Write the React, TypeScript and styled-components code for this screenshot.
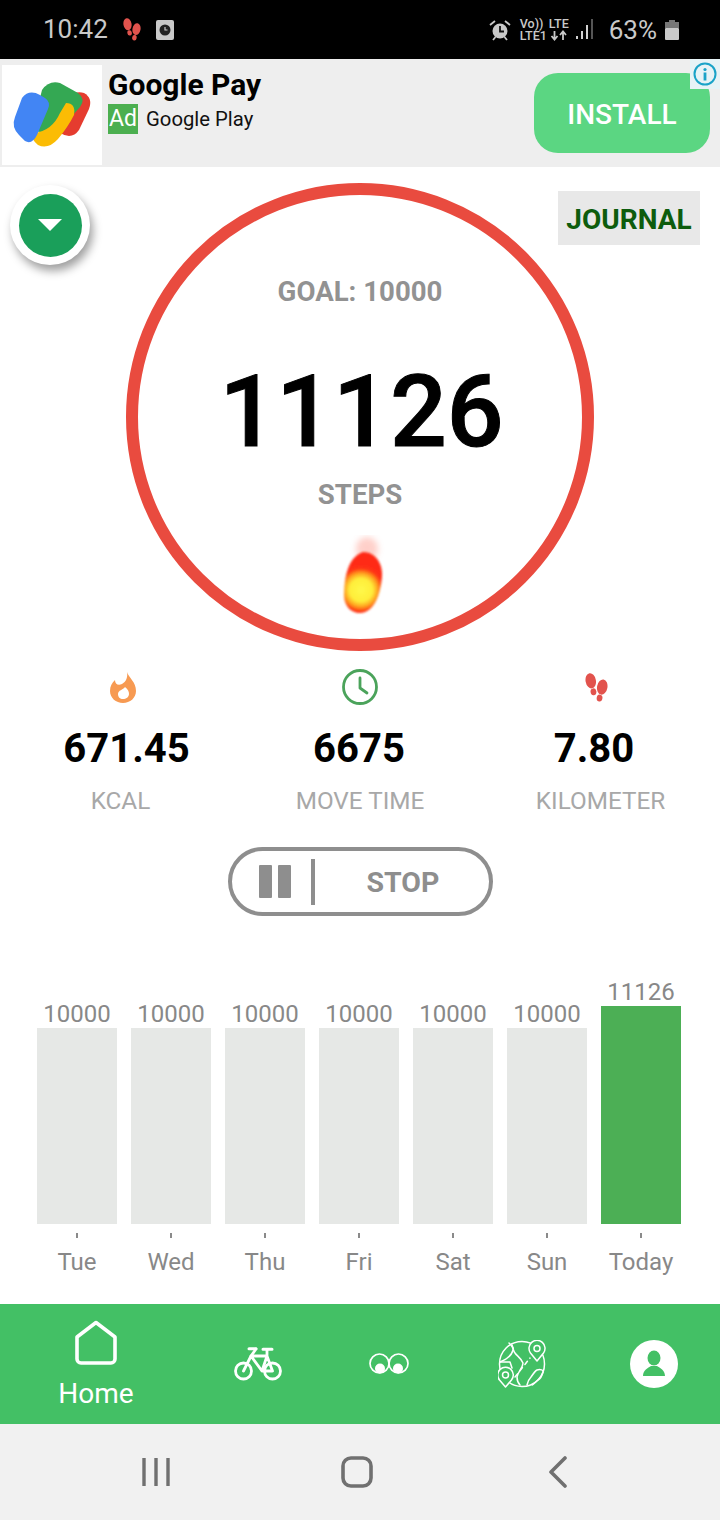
import React from "react";
import styled, { createGlobalStyle } from "styled-components";

const Global = createGlobalStyle`
  html, body { margin: 0; padding: 0; background: #fff; }
  body { font-family: Roboto, "Liberation Sans", sans-serif; }
  * { box-sizing: border-box; }
`;

const Page = styled.div`
  width: 720px; height: 1520px; display: flex; flex-direction: column; background: #fff; overflow: hidden;
`;

/* status bar */
const StatusBar = styled.div`
  height: 59px; background: #000; color: #c9c9c9; display: flex; align-items: center; padding: 0 0 0 43px; flex: none;
`;
const Time = styled.span`font-size: 26px; line-height: 59px; margin-right: 15px;`;
const StatusRight = styled.div`margin-left: auto; display: flex; align-items: center; padding-right: 41px;`;
const NetStack = styled.div`
  display: flex; flex-direction: column; font-size: 12.5px; line-height: 12px; color: #c9c9c9; align-items: flex-start; font-weight: 500; margin-left: 9px;
`;
const NetStackCenter = styled(NetStack)`align-items: center; margin-left: 2px; margin-right: 7px;`;
const Percent = styled.span`font-size: 26px; margin-left: 15px; margin-right: 8px;`;

/* ad */
const AdBar = styled.div`
  height: 108px; background: #eeeeee; display: flex; position: relative; padding: 6px 10px 2px 2px; flex: none;
`;
const AdIcon = styled.div`width: 100px; height: 100px; background: #fff; flex: none;`;
const AdText = styled.div`margin-left: 6px; display: flex; flex-direction: column;`;
const AdTitle = styled.div`font-size: 30px; font-weight: 700; line-height: 40px; color: #000;`;
const AdRow = styled.div`display: flex; align-items: center; margin-top: -1px;`;
const AdTag = styled.span`
  width: 30px; height: 30px; background: #4caf50; color: #fff; font-size: 23px; line-height: 30px; text-align: center;
`;
const AdStore = styled.span`font-size: 20.3px; color: #111; margin-left: 8px;`;
const InstallBtn = styled.div`
  margin-left: auto; margin-top: 8px; width: 176px; height: 80px; border-radius: 24px; background: #5bd682; color: #fff;
  font-size: 28px; font-weight: 500; display: flex; align-items: center; justify-content: center; padding-top: 3px;
`;
const InfoBadge = styled.div`
  position: absolute; top: 0; right: 0; width: 30px; height: 30px; background: #e6f3f6; display: flex; align-items: center; justify-content: center;
`;

/* hero */
const Hero = styled.section`
  position: relative; display: flex; justify-content: center; padding-top: 16px; flex: none;
`;
const Ring = styled.div`
  width: 468px; height: 468px; border-radius: 50%; border: 12px solid #e94b3f; display: flex; flex-direction: column; align-items: center; padding-top: 79px;
`;
const Goal = styled.div`font-size: 27.6px; font-weight: 700; color: #929292; line-height: 36px;`;
const Count = styled.div`font-size: 100px; font-weight: 500; color: #000; line-height: 110px; margin-top: 47px; margin-left: 3px; -webkit-text-stroke: 1px #000;`;
const StepsLabel = styled.div`font-size: 27.6px; font-weight: 700; color: #929292; line-height: 36px; margin-top: 10px;`;
const FlameWrap = styled.div`margin-top: 22px; margin-left: 4px; width: 46px; height: 80px; flex: none;`;
const FabOuter = styled.button`
  position: absolute; left: 10px; top: 18px; width: 80px; height: 80px; border-radius: 50%; background: #fff; border: 0; padding: 0;
  box-shadow: 3px 6px 10px rgba(0,0,0,0.38); display: flex; align-items: center; justify-content: center;
`;
const FabInner = styled.span`
  width: 63px; height: 63px; border-radius: 50%; background: #1a9f5a; display: flex; align-items: center; justify-content: center;
`;
const JournalBtn = styled.div`
  position: absolute; left: 558px; top: 24px; width: 142px; height: 54px; background: #e8e8e8; color: #0d5c0d; font-size: 28px; font-weight: 700;
  display: flex; align-items: center; justify-content: center; padding-top: 3px;
`;

/* stats */
const StatsGrid = styled.div`
  display: grid; grid-template-columns: 238px 238px 238px; padding-left: 3px; margin-top: 18px; flex: none;
`;
const Stat = styled.div`display: flex; flex-direction: column; align-items: center;`;
const StatIcon = styled.div<{ $dx?: number }>`height: 36px; display: flex; align-items: center; justify-content: center; margin-left: ${p => p.$dx ?? 0}px;`;
const StatValue = styled.div<{ $dx?: number }>`font-size: 40px; font-weight: 700; color: #000; line-height: 48px; margin-top: 20px; margin-left: ${p => p.$dx ?? 0}px;`;
const StatLabel = styled.div<{ $dx?: number }>`font-size: 24.3px; color: #a8a8a8; line-height: 30px; margin-top: 13px; margin-left: ${p => p.$dx ?? 0}px;`;

/* pause / stop */
const PillRow = styled.div`display: flex; justify-content: center; margin-top: 31px; flex: none;`;
const Pill = styled.div`
  width: 265px; height: 69px; border: 4px solid #8e8e8e; border-radius: 35px; display: flex; align-items: center; padding-left: 27px;
`;
const PauseBar = styled.span`width: 13px; height: 33px; background: #8e8e8e; border-radius: 1px; & + & { margin-left: 6px; }`;
const PillDivider = styled.span`width: 4px; height: 46px; background: #8e8e8e; margin-left: 20px;`;
const StopText = styled.span`font-size: 28.5px; font-weight: 700; color: #8e8e8e; margin-left: 52px; padding-top: 2px;`;

/* chart */
const Chart = styled.div`
  display: flex; align-items: flex-end; height: 246px; padding-left: 30px; margin-top: 62px; flex: none;
`;
const Col = styled.div`width: 94px; display: flex; flex-direction: column; align-items: center;`;
const BarValue = styled.div`font-size: 24px; color: #888; line-height: 28px;`;
const Bar = styled.div<{ $h: number; $active?: boolean }>`
  width: 80px; height: ${p => p.$h}px; background: ${p => (p.$active ? "#4caf55" : "#e6e8e6")};
`;
const Axis = styled.div`display: flex; padding-left: 30px; flex: none;`;
const AxisCol = styled.div`width: 94px; display: flex; flex-direction: column; align-items: center;`;
const Tick = styled.span`width: 2px; height: 5px; background: #8a8a8a; margin-top: 9px;`;
const DayLabel = styled.span`font-size: 24px; color: #888; line-height: 30px; margin-top: 9px;`;

/* nav */
const Nav = styled.nav`
  margin-top: auto; height: 120px; background: #43c065; display: grid; grid-template-columns: 192px 132px 130px 136px 128px; align-items: center; flex: none;
`;
const NavItem = styled.div`display: flex; flex-direction: column; align-items: center; color: #fff; line-height: 0;`;
const NavLabel = styled.span`font-size: 28px; line-height: 30px; color: #fff; margin-top: 13px;`;

const SysBar = styled.div`
  height: 96px; background: #f1f1f1; display: grid; grid-template-columns: repeat(3, 201px); padding-left: 55px; align-items: center; justify-items: center; flex: none;
`;

const Foot = ({ w, h, c }: { w: number; h: number; c: string }) => (
  <svg width={w} height={h} viewBox="0 0 24 30">
    <g fill={c}>
      <ellipse cx="6" cy="8" rx="5.4" ry="8" transform="rotate(-10 6 8)" />
      <ellipse cx="8.8" cy="19.5" rx="3" ry="3.6" transform="rotate(-10 8.8 19.5)" />
      <ellipse cx="18" cy="14.5" rx="5.4" ry="8" transform="rotate(10 18 14.5)" />
      <ellipse cx="15.2" cy="26" rx="3" ry="3.6" transform="rotate(10 15.2 26)" />
    </g>
  </svg>
);

const GPayLogo = () => (
  <svg width="100" height="100" viewBox="0 0 100 100">
    <path d="M64 33 Q74 25 82 28 Q91 33 87 44 L77 65 Q70 75 58 68 Z" fill="#e53c2f" />
    <path d="M40 25 Q47 15 58 18 L76 28 Q84 34 78 42 L62 60 Q52 70 30 66 Z" fill="#34a853" />
    <path d="M32 68 Q50 66 58 48 L64 38 Q74 38 72 50 Q66 62 56 74 Q46 85 36 80 Q29 75 32 68Z" fill="#fbbc04" />
    <path d="M20 33 Q27 24 38 30 L43 33 Q49 37 46 44 L35 70 Q30 80 23 76 L17 70 Q9 62 13 52 Z" fill="#4285f4" />
  </svg>
);

const Flame = () => (
  <svg width="46" height="80" viewBox="0 0 46 80">
    <defs>
      <radialGradient id="fl" gradientUnits="userSpaceOnUse" cx="22" cy="55" r="27">
        <stop offset="0%" stopColor="#fff84a" />
        <stop offset="42%" stopColor="#ffee3a" />
        <stop offset="62%" stopColor="#ffa020" />
        <stop offset="80%" stopColor="#ff3312" />
        <stop offset="100%" stopColor="#ff2a12" />
      </radialGradient>
      <filter id="fb" x="-20%" y="-20%" width="140%" height="140%"><feGaussianBlur stdDeviation="0.9" /></filter>
      <filter id="fb2" x="-50%" y="-50%" width="200%" height="200%"><feGaussianBlur stdDeviation="3" /></filter>
    </defs>
    <ellipse cx="28" cy="14" rx="11" ry="12" fill="#ff8a7a" opacity="0.4" filter="url(#fb2)" />
    <path d="M24 17 C36 17 44 28 43 42 C42 52 40 60 37 66 C33 74 27 78 21 78 C11 78 5 70 5 60 C5 46 8 22 24 17Z" fill="url(#fl)" filter="url(#fb)" />
  </svg>
);

const days = ["Tue", "Wed", "Thu", "Fri", "Sat", "Sun", "Today"];
const values = [10000, 10000, 10000, 10000, 10000, 10000, 11126];

export default function App() {
  return (
    <Page>
      <Global />
      <StatusBar>
        <Time>10:42</Time>
        <Foot w={18} h={25} c="#e2534d" />
        <svg width="18" height="20" viewBox="0 0 18 20" style={{ marginLeft: 15 }}>
          <rect width="18" height="20" rx="2" fill="#c9c9c9" />
          <circle cx="9" cy="10" r="5.5" fill="#222" />
          <path d="M9 7v3h2.5" stroke="#c9c9c9" strokeWidth="1.2" fill="none" />
        </svg>
        <StatusRight>
          <svg width="22" height="22" viewBox="0 0 22 22">
            <circle cx="11" cy="12" r="7.5" fill="#c9c9c9" />
            <path d="M11 7v5.5h4" stroke="#111" strokeWidth="1.8" fill="none" />
            <path d="M1 6l5-4M21 6l-5-4M4 21l2.5-3M18 21l-2.5-3" stroke="#c9c9c9" strokeWidth="1.8" />
          </svg>
          <NetStack>
            <span>Vo))</span>
            <span>LTE1</span>
          </NetStack>
          <NetStackCenter>
            <span>LTE</span>
            <svg width="18" height="11" viewBox="0 0 18 11">
              <path d="M4.5 1v8M1.5 6l3 3.5L7.5 6M13 10V2M10 5l3-3.5L16 5" stroke="#c9c9c9" strokeWidth="1.8" fill="none" />
            </svg>
          </NetStackCenter>
          <svg width="18" height="22" viewBox="0 0 18 22">
            <rect x="0" y="17" width="2" height="3" fill="#d0d0d0" />
            <rect x="5" y="12" width="2" height="8" fill="#d0d0d0" />
            <rect x="10" y="6" width="2" height="14" fill="#d0d0d0" />
            <rect x="15" y="0" width="2" height="20" fill="#555" />
          </svg>
          <Percent>63%</Percent>
          <svg width="14" height="20" viewBox="0 0 14 20">
            <rect x="4" y="0" width="6" height="3" fill="#777" />
            <rect x="0" y="2" width="14" height="6" fill="#777" />
            <rect x="0" y="8" width="14" height="12" rx="1" fill="#c9c9c9" />
          </svg>
        </StatusRight>
      </StatusBar>

      <AdBar>
        <AdIcon><GPayLogo /></AdIcon>
        <AdText>
          <AdTitle>Google Pay</AdTitle>
          <AdRow>
            <AdTag>Ad</AdTag>
            <AdStore>Google Play</AdStore>
          </AdRow>
        </AdText>
        <InstallBtn>INSTALL</InstallBtn>
        <InfoBadge>
          <svg width="24" height="24" viewBox="0 0 24 24">
            <circle cx="12" cy="12" r="10.5" fill="none" stroke="#1aa3c8" strokeWidth="2" />
            <circle cx="12" cy="7.5" r="1.6" fill="#1aa3c8" />
            <rect x="10.6" y="10.5" width="2.8" height="8" fill="#1aa3c8" />
          </svg>
        </InfoBadge>
      </AdBar>

      <Hero>
        <FabOuter aria-label="menu">
          <FabInner>
            <svg width="26" height="14" viewBox="0 0 26 14"><path d="M1 1h24L13 13z" fill="#fff" /></svg>
          </FabInner>
        </FabOuter>
        <Ring>
          <Goal>GOAL: 10000</Goal>
          <Count>11126</Count>
          <StepsLabel>STEPS</StepsLabel>
          <FlameWrap><Flame /></FlameWrap>
        </Ring>
        <JournalBtn>JOURNAL</JournalBtn>
      </Hero>

      <StatsGrid>
        <Stat>
          <StatIcon $dx={2}>
            <svg width="26" height="31" viewBox="0 0 26 31">
              <path fillRule="evenodd" fill="#f79a52" d="M17 0C19 6 26 10 26 19C26 26 20 31 13 31C6 31 0 26 0 19C0 14 2 11 5 8C5 12 8 14 12 12C16 10 18 5 17 0ZM8 22C8 25 10 27 13 27C16 27 19 25 19 22C19 20 18 17 15 15C13 18 8 18 8 22Z" />
            </svg>
          </StatIcon>
          <StatValue $dx={9}>671.45</StatValue>
          <StatLabel $dx={-3}>KCAL</StatLabel>
        </Stat>
        <Stat>
          <StatIcon>
            <svg width="36" height="36" viewBox="0 0 36 36">
              <circle cx="18" cy="18" r="16.5" fill="none" stroke="#4ba35b" strokeWidth="2.8" />
              <path d="M18 9v10l7 5" fill="none" stroke="#4ba35b" strokeWidth="2.8" strokeLinecap="round" strokeLinejoin="round" />
            </svg>
          </StatIcon>
          <StatValue $dx={-2}>6675</StatValue>
          <StatLabel>MOVE TIME</StatLabel>
        </Stat>
        <Stat>
          <StatIcon $dx={-4}><Foot w={23} h={29} c="#e2534d" /></StatIcon>
          <StatValue $dx={-8}>7.80</StatValue>
          <StatLabel $dx={5}>KILOMETER</StatLabel>
        </Stat>
      </StatsGrid>

      <PillRow>
        <Pill>
          <PauseBar />
          <PauseBar />
          <PillDivider />
          <StopText>STOP</StopText>
        </Pill>
      </PillRow>

      <Chart>
        {values.map((v, i) => (
          <Col key={days[i]}>
            <BarValue>{v}</BarValue>
            <Bar $h={v > 10000 ? 218 : 196} $active={v > 10000} />
          </Col>
        ))}
      </Chart>
      <Axis>
        {days.map(d => (
          <AxisCol key={d}>
            <Tick />
            <DayLabel>{d}</DayLabel>
          </AxisCol>
        ))}
      </Axis>

      <Nav>
        <NavItem>
          <svg width="44" height="46" viewBox="0 0 44 46">
            <path d="M22 2.5 L41 17 V39 a4 4 0 0 1-4 4 H7 a4 4 0 0 1-4-4 V17 Z" fill="none" stroke="#fff" strokeWidth="3.6" strokeLinejoin="round" />
          </svg>
          <NavLabel>Home</NavLabel>
        </NavItem>
        <NavItem>
          <svg width="48" height="34" viewBox="0 0 48 34" fill="none" stroke="#fff" strokeWidth="2.8" strokeLinejoin="round" strokeLinecap="round">
            <circle cx="9.5" cy="24" r="8" />
            <circle cx="38.5" cy="24" r="8" />
            <path d="M9.5 24 L17 9 H33 L38.5 24 H28 L17 9 M28 24 L33 9 M33 2.5 L33 9" />
            <path d="M15 1.8h7 M29 2.2h9" strokeWidth="3" />
            <path d="M22 2 L17 9" />
          </svg>
        </NavItem>
        <NavItem>
          <svg width="40" height="24" viewBox="0 0 40 24">
            <circle cx="10.5" cy="11.5" r="9.5" fill="none" stroke="#fff" strokeWidth="1.7" />
            <circle cx="29.5" cy="11.5" r="9.5" fill="none" stroke="#fff" strokeWidth="1.7" />
            <circle cx="11" cy="16.5" r="5" fill="#fff" />
            <circle cx="29" cy="16.5" r="5" fill="#fff" />
          </svg>
        </NavItem>
        <NavItem>
          <svg width="48" height="48" viewBox="0 0 48 48" fill="none" stroke="#fff" strokeWidth="1.5" strokeLinecap="round" strokeLinejoin="round">
            <circle cx="24" cy="24" r="22.5" />
            <path d="M11 3 C14 6 16 8 15 10 C14 15 9 19 2 22" />
            <path d="M2 22 H12 L14 28" />
            <path d="M14 5 C15 9 16 12 17 13 C19 16 23 18 25 23 C25 28 20 31 19 37 C19 40 20 43 22 45" />
            <path d="M29 45 C30 41 31 39 33 37 C35 34 37 31 39 30 C42 29 46 30 45 32 C44 36 42 39 40 40 C38 42 36 44 34 45" />
            <path d="M17 37 L32 18" strokeDasharray="4 4" />
            <path d="M39 21 L32.5 13 A8 8 0 1 1 45.5 13 Z" fill="#43c065" />
            <circle cx="39" cy="8.5" r="3" />
            <path d="M7.5 47 L1.5 40 A7.8 7.8 0 1 1 13.5 40 Z" fill="#43c065" />
            <circle cx="7.5" cy="35" r="3" />
          </svg>
        </NavItem>
        <NavItem>
          <svg width="48" height="48" viewBox="0 0 48 48">
            <circle cx="24" cy="24" r="24" fill="#fff" />
            <ellipse cx="24" cy="18" rx="6.5" ry="7.5" fill="#43c065" />
            <path d="M13 36 C13 30 18 28 21 26 H27 C30 28 35 30 35 36 Z" fill="#43c065" />
          </svg>
        </NavItem>
      </Nav>

      <SysBar>
        <svg width="30" height="30" viewBox="0 0 30 30">
          <path d="M3 1v28M15 1v28M27 1v28" stroke="#707070" strokeWidth="3.4" fill="none" />
        </svg>
        <svg width="32" height="32" viewBox="0 0 32 32">
          <rect x="2" y="2" width="28" height="28" rx="8" fill="none" stroke="#707070" strokeWidth="3.6" />
        </svg>
        <svg width="20" height="32" viewBox="0 0 20 32">
          <path d="M17 2 L3 16 L17 30" fill="none" stroke="#707070" strokeWidth="3.6" strokeLinecap="round" strokeLinejoin="round" />
        </svg>
      </SysBar>
    </Page>
  );
}
